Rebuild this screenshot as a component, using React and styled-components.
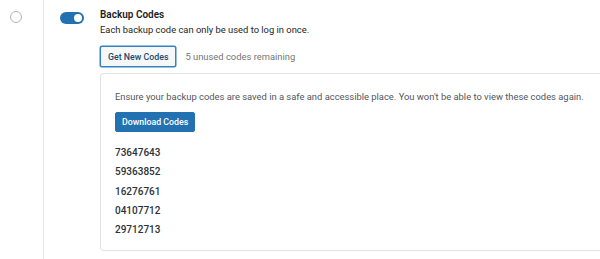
import React from 'react'
import styled, { createGlobalStyle } from 'styled-components'

const GlobalStyle = createGlobalStyle`
  body {
    margin: 0;
    background: #fff;
    font-family: Roboto, "Liberation Sans", sans-serif;
    color: #1e1e1e;
    overflow: hidden;
  }
`

const codes = ['73647643', '59363852', '16276761', '04107712', '29712713']

const App = () => {
  return (
    <>
      <GlobalStyle />
      <Page>
        <Gutter>
          <Radio />
        </Gutter>
        <Main>
          <Toggle $on />
          <Content>
            <Title>Backup Codes</Title>
            <Description>Each backup code can only be used to log in once.</Description>
            <ActionRow>
              <Button $variant="secondary">Get New Codes</Button>
              <Hint>5 unused codes remaining</Hint>
            </ActionRow>
            <Panel>
              <Notice>Ensure your backup codes are saved in a safe and accessible place. You won't be able to view these codes again.</Notice>
              <Button $variant="primary">Download Codes</Button>
              <CodeList>
                {codes.map(code => <Code key={code}>{code}</Code>)}
              </CodeList>
            </Panel>
          </Content>
        </Main>
      </Page>
    </>
  )
}

const Page = styled.div`
  display: flex;
  height: 259px;
  width: 600px;
`

const Gutter = styled.div`
  width: 44px;
  flex-shrink: 0;
  border-right: 1px solid #e8e8e8;
  display: flex;
  justify-content: center;
  align-items: flex-start;
  padding-top: 11px;
  box-sizing: border-box;
`

const Radio = styled.span`
  width: 12px;
  height: 12px;
  margin-left: -11px;
  border: 1px solid #b4b4b4;
  border-radius: 50%;
  box-sizing: border-box;
`

const Main = styled.div`
  display: flex;
  align-items: flex-start;
  gap: 16px;
  padding-left: 16px;
`

const Toggle = styled.span`
  position: relative;
  width: 24px;
  height: 12px;
  margin-top: 12px;
  border-radius: 6px;
  background: ${({ $on }) => ($on ? '#2271b1' : '#949494')};
  flex-shrink: 0;

  &::after {
    content: '';
    position: absolute;
    top: 2px;
    left: ${({ $on }) => ($on ? '14px' : '2px')};
    width: 8px;
    height: 8px;
    border-radius: 50%;
    background: #fff;
  }
`

const Content = styled.div`
  width: 520px;
  padding-top: 7px;
  flex-shrink: 0;
`

const Title = styled.div`
  font-size: 10px;
  font-weight: 600;
  line-height: 16px;
`

const Description = styled.div`
  font-size: 9.4px;
  line-height: 14px;
`

const ActionRow = styled.div`
  display: flex;
  align-items: center;
  gap: 9px;
  margin-top: 9px;
`

const Button = styled.button`
  font-family: inherit;
  font-size: 8.8px;
  font-weight: 500;
  height: ${({ $variant }) => ($variant === 'primary' ? '20px' : '21px')};
  padding: 0 ${({ $variant }) => ($variant === 'primary' ? '6px' : '7px')};
  border-radius: 2px;
  cursor: pointer;
  border: 1px solid ${({ $variant }) => ($variant === 'primary' ? '#2271b1' : '#3582c4')};
  background: ${({ $variant }) => ($variant === 'primary' ? '#2271b1' : '#f6f7f7')};
  color: ${({ $variant }) => ($variant === 'primary' ? '#fff' : '#1d4a6e')};
  box-shadow: ${({ $variant }) => ($variant === 'primary' ? 'none' : '0 0 0 0.5px #3582c4')};
`

const Hint = styled.span`
  font-size: 9.4px;
  color: #757575;
`

const Panel = styled.div`
  margin-top: 6px;
  border: 1px solid #e3e3e3;
  border-radius: 3px;
  padding: 16px 14px 11px;
  display: flex;
  flex-direction: column;
  align-items: flex-start;
`

const Notice = styled.div`
  font-size: 9.4px;
  line-height: 14px;
  color: #50575e;
  margin-bottom: 8px;
`

const CodeList = styled.div`
  margin-top: 11px;
`

const Code = styled.div`
  font-size: 10px;
  font-weight: 500;
  line-height: 19.3px;
  color: #2c3338;
`

export default App
